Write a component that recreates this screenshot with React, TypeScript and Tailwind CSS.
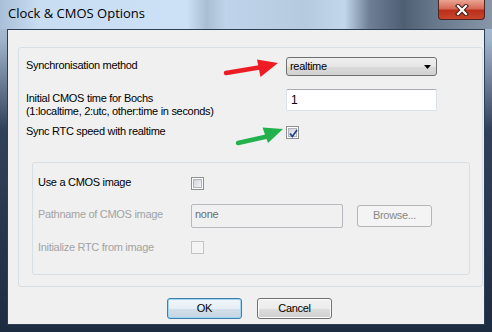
import React from 'react';

const Box = ({ checked, disabled }: { checked?: boolean; disabled?: boolean }) => (
    <div className={`relative w-[13px] h-[13px] shrink-0 border p-[1px] ${disabled ? 'border-[#c4c4c4] bg-[#f4f4f4]' : 'border-[#8e8f8f] bg-white'}`}>
        <div className={`w-full h-full ${disabled ? 'bg-[#f4f4f4]' : 'border border-[#b0b4ba] bg-[linear-gradient(135deg,#cfd3d9,#f4f5f6)]'}`} />
        {checked && (
            <svg className="absolute left-0 top-0" width="13" height="13" viewBox="0 0 13 13">
                <path d="M3 6.5 L5.3 9.5 L10 3" fill="none" stroke="#2a438f" strokeWidth="1.8" />
            </svg>
        )}
    </div>
);

export default function App() {
    return (
        <div className="w-[492px] h-[332px] flex flex-col overflow-hidden relative font-['Liberation_Sans',Arial,sans-serif] text-[11px] tracking-[-0.3px] text-black bg-[linear-gradient(to_bottom,#b3c7dd_0px,#9fb3ca_40px,#2f4159_130px,#1d2c40_100%)]">

            {/* Title bar */}
            <div className="h-[29px] shrink-0 relative flex items-center pl-[8px] pb-[1px] bg-[linear-gradient(to_right,#a9bfd8_0%,#c9ddf2_8%,#cde1f6_38%,#aabed3_42%,#bfd4ea_46%,#b5c9df_62%,#c2d7ec_70%,#6f8096_75%,#4e5e73_82%,#66768b_88%,#8796a8_100%)]">
                <span className="text-[13px] tracking-normal font-['Open_Sans',sans-serif] text-black">Clock &amp; CMOS Options</span>
                <div className="absolute right-[7px] top-0 w-[47px] h-[20px] rounded-b-[4px] border border-t-0 border-[#4b2520] bg-[linear-gradient(to_bottom,#eaa493_0%,#d66a56_45%,#bb2f1a_55%,#c9452c_100%)] flex items-center justify-center">
                    <svg width="14" height="12" viewBox="0 0 14 12">
                        <path d="M3 2 L11 10 M11 2 L3 10" stroke="#3c1d18" strokeWidth="4.2" strokeLinecap="square" />
                        <path d="M3 2 L11 10 M11 2 L3 10" stroke="#ffffff" strokeWidth="2.2" strokeLinecap="square" />
                    </svg>
                </div>
            </div>

            {/* Client area */}
            <div className="ml-[7px] w-[478px] h-[296px] shrink-0 border border-[#2d3e54] bg-[#f0f0f0] flex flex-col">

                {/* Outer group */}
                <div className="ml-[10px] mt-[17px] w-[465px] h-[240px] border border-[#d5dfe5] rounded-[3px] flex flex-col">

                    <div className="mt-[9px] h-[19px] flex items-center">
                        <span className="w-[267px] pl-[7px] pb-[2px]">Synchronisation method</span>
                        <div className="w-[151px] h-[19px] border border-[#707070] rounded-[3px] bg-[linear-gradient(to_bottom,#f0f0f0_0%,#e6e6e6_50%,#dadada_51%,#d2d2d2_100%)] flex items-center justify-between pl-[3px] pr-[5px]">
                            <span className="pb-[1px]">realtime</span>
                            <svg width="7" height="4" viewBox="0 0 7 4"><path d="M0 0 H7 L3.5 4 Z" fill="#000" /></svg>
                        </div>
                    </div>

                    <div className="mt-[13px] h-[29px] flex items-start">
                        <div className="w-[267px] pl-[7px] pt-[3px] leading-[13px]">
                            <div>Initial CMOS time for Bochs</div>
                            <div>(1:localtime, 2:utc, other:time in seconds)</div>
                        </div>
                        <div className="w-[151px] h-[22px] border border-[#dbe1e8] border-t-[#abadb3] rounded-[2px] bg-white flex items-center pl-[4px] text-[12px]">1</div>
                    </div>

                    <div className="mt-[8px] h-[13px] flex items-center">
                        <span className="w-[267px] pl-[7px] pb-[3px]">Sync RTC speed with realtime</span>
                        <Box checked />
                    </div>

                    {/* Inner group */}
                    <div className="ml-[13px] mt-[23px] w-[438px] h-[113px] border border-[#d5dfe5] rounded-[3px] flex flex-col">
                        <div className="mt-[14px] h-[13px] flex items-center">
                            <span className="w-[158px] pl-[5px] pb-[2px]">Use a CMOS image</span>
                            <Box />
                        </div>
                        <div className="mt-[14px] h-[24px] flex items-center text-[#a3a3a3]">
                            <span className="w-[158px] pl-[5px] pb-[4px]">Pathname of CMOS image</span>
                            <div className="w-[152px] h-[24px] border border-[#b6b9bd] rounded-[2px] bg-[#f0f0f0] flex items-center pl-[3px] pb-[3px] text-[#6d6d6d]">none</div>
                            <div className="ml-[14px] w-[75px] h-[22px] border border-[#b5b5b5] rounded-[3px] bg-[#f4f4f4] flex items-center justify-center pb-[1px] text-[#888888]">Browse...</div>
                        </div>
                        <div className="mt-[13px] h-[13px] flex items-center text-[#a3a3a3]">
                            <span className="w-[158px] pl-[5px] pb-[1px]">Initialize RTC from image</span>
                            <Box disabled />
                        </div>
                    </div>
                </div>

                {/* Buttons */}
                <div className="mt-[11px] flex">
                    <button className="ml-[159px] w-[75px] h-[21px] border border-[#3c7fb1] rounded-[3px] bg-[linear-gradient(to_bottom,#f2f7fb_0%,#e5eef5_50%,#d3dfe9_51%,#c7d6e3_100%)] shadow-[inset_0_0_0_1px_#9fd5f0] flex items-center justify-center pb-[1px]">OK</button>
                    <button className="ml-[15px] w-[75px] h-[21px] border border-[#707070] rounded-[3px] bg-[linear-gradient(to_bottom,#f2f2f2_0%,#ebebeb_50%,#dddddd_51%,#cfcfcf_100%)] shadow-[inset_0_0_0_1px_#fbfbfb] flex items-center justify-center pb-[1px]">Cancel</button>
                </div>
            </div>

            {/* Annotation arrows */}
            <svg className="absolute left-0 top-0 pointer-events-none" width="492" height="332" viewBox="0 0 492 332">
                <path d="M226 73 L262 67" stroke="#ed1c24" strokeWidth="4.5" strokeLinecap="round" />
                <path d="M278 63 L257 59.5 L260.5 77 Z" fill="#ed1c24" />
                <path d="M238 143 L267 136.5" stroke="#22b14c" strokeWidth="4.5" strokeLinecap="round" />
                <path d="M283 129 L262.5 127.5 L268 143 Z" fill="#22b14c" />
            </svg>
        </div>
    );
}
